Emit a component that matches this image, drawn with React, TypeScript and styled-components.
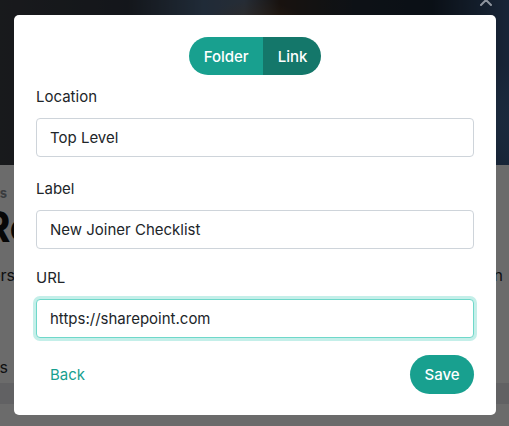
import React, { useEffect, useRef } from "react";
import styled, { createGlobalStyle } from "styled-components";

const GlobalStyle = createGlobalStyle`
  html, body { margin: 0; padding: 0; }
  body {
    font-family: Inter, "Noto Sans", "Liberation Sans", sans-serif;
    background: #ffffff;
    overflow: hidden;
  }
  * { box-sizing: border-box; }
`;

const Page = styled.div`
  position: relative;
  width: 100%;
  height: 426px;
  overflow: hidden;
  background: #ffffff;
`;

const Hero = styled.div`
  height: 165px;
  background:
    radial-gradient(ellipse 60px 40px at 255px 40px, rgba(140, 100, 60, 0.7), transparent),
    radial-gradient(ellipse 90px 60px at 470px 120px, rgba(70, 110, 160, 0.8), transparent),
    linear-gradient(90deg, #3b3e44 0%, #2f3540 25%, #4d6785 40%, #5a6a80 48%, #3a2c24 55%, #202a36 70%, #1a2736 85%, #3b5a86 100%);
`;

const Content = styled.div`
  display: flex;
  flex-direction: column;
  padding-top: 20px;
`;

const EdgeRow = styled.div`
  display: flex;
  justify-content: space-between;
  margin: ${(p) => p.$margin || "0"};
`;

const LeftClip = styled.div`
  width: ${(p) => p.$w}px;
  overflow: hidden;
  display: flex;
  justify-content: flex-end;
  white-space: nowrap;
`;

const Eyebrow = styled.span`
  font-size: 13px;
  font-weight: 700;
  color: #8a8f96;
  line-height: 16px;
`;

const Heading = styled.span`
  font-size: 42px;
  font-weight: 700;
  color: #111;
  line-height: 48px;
  letter-spacing: -0.5px;
`;

const BodyText = styled.span`
  font-size: 16px;
  color: #25282c;
  line-height: 20px;
`;

const RightText = styled(BodyText)`
  margin-right: 6px;
`;

const FooterBand = styled.div`
  height: 21px;
  margin-top: 6px;
  background: #e6e8eb;
`;

const Overlay = styled.div`
  position: absolute;
  inset: 0;
  background: rgba(0, 0, 0, 0.58);
  display: flex;
  justify-content: center;
  align-items: flex-start;
  padding-top: 15px;
`;

const CloseX = styled.div`
  position: absolute;
  top: -9px;
  right: 16px;
  color: #b7bcc4;
  opacity: 0.75;
`;

const Modal = styled.div`
  width: 482px;
  margin-left: 1px;
  background: #ffffff;
  border-radius: 5px;
  padding: 22px 22px 21px;
  display: flex;
  flex-direction: column;
`;

const ToggleGroup = styled.div`
  align-self: center;
  display: flex;
  height: 38px;
  border-radius: 19px;
  overflow: hidden;
`;

const ToggleButton = styled.button`
  border: none;
  margin: 0;
  height: 38px;
  padding: 0 14px 0 15px;
  font-family: inherit;
  font-size: 15px;
  font-weight: 500;
  color: #ffffff;
  background: ${(p) => (p.$active ? "#14776a" : "#18a08f")};
  cursor: pointer;
`;

const Field = styled.div`
  display: flex;
  flex-direction: column;
  gap: 10px;
  margin-top: ${(p) => p.$top}px;
`;

const Label = styled.label`
  font-size: 15px;
  line-height: 22px;
  color: #212529;
`;

const Input = styled.input`
  height: 39px;
  width: 100%;
  border: 1px solid ${(p) => (p.$focused ? "#6fd8ca" : "#ced4da")};
  border-radius: 4px;
  padding: 0 13px;
  font-family: inherit;
  font-size: 15px;
  color: #212529;
  background: #ffffff;
  outline: none;
  box-shadow: ${(p) => (p.$focused ? "0 0 0 3px #c4efe9" : "none")};
  caret-color: #212529;
`;

const Footer = styled.div`
  display: flex;
  justify-content: space-between;
  align-items: center;
  margin-top: 17px;
`;

const LinkButton = styled.button`
  border: none;
  background: none;
  font-family: inherit;
  font-size: 15px;
  color: #17a08f;
  padding: 0 14px;
  height: 39px;
  cursor: pointer;
`;

const PrimaryButton = styled.button`
  border: none;
  background: #18a08f;
  color: #ffffff;
  font-family: inherit;
  font-size: 15px;
  font-weight: 500;
  height: 39px;
  width: 64px;
  border-radius: 20px;
  cursor: pointer;
`;

export default function App() {
  const urlRef = useRef<HTMLInputElement>(null);
  useEffect(() => {
    const el = urlRef.current;
    if (el) {
      el.focus();
      const n = el.value.length;
      el.setSelectionRange(n, n);
    }
  }, []);

  return (
    <>
      <GlobalStyle />
      <Page>
        <Hero />
        <Content>
          <EdgeRow>
            <LeftClip $w={7}>
              <Eyebrow>Tools</Eyebrow>
            </LeftClip>
          </EdgeRow>
          <EdgeRow $margin="2px 0 0">
            <LeftClip $w={34}>
              <Heading>Re</Heading>
            </LeftClip>
          </EdgeRow>
          <EdgeRow $margin="14px 0 0">
            <LeftClip $w={15}>
              <BodyText>Members</BodyText>
            </LeftClip>
            <RightText>on</RightText>
          </EdgeRow>
          <EdgeRow $margin="72px 0 0">
            <LeftClip $w={8}>
              <BodyText>Links</BodyText>
            </LeftClip>
          </EdgeRow>
          <FooterBand />
        </Content>
        <Overlay>
          <CloseX>
            <svg width="14" height="14" viewBox="0 0 14 14" fill="none" stroke="currentColor" strokeWidth="2" strokeLinecap="round">
              <path d="M2 2 L12 12 M12 2 L2 12" />
            </svg>
          </CloseX>
          <Modal>
            <ToggleGroup>
              <ToggleButton>Folder</ToggleButton>
              <ToggleButton $active>Link</ToggleButton>
            </ToggleGroup>
            <Field $top={11}>
              <Label>Location</Label>
              <Input readOnly value="Top Level" />
            </Field>
            <Field $top={21}>
              <Label>Label</Label>
              <Input readOnly value="New Joiner Checklist" />
            </Field>
            <Field $top={18}>
              <Label>URL</Label>
              <Input ref={urlRef} $focused readOnly value="https://sharepoint.com" />
            </Field>
            <Footer>
              <LinkButton>Back</LinkButton>
              <PrimaryButton>Save</PrimaryButton>
            </Footer>
          </Modal>
        </Overlay>
      </Page>
    </>
  );
}
